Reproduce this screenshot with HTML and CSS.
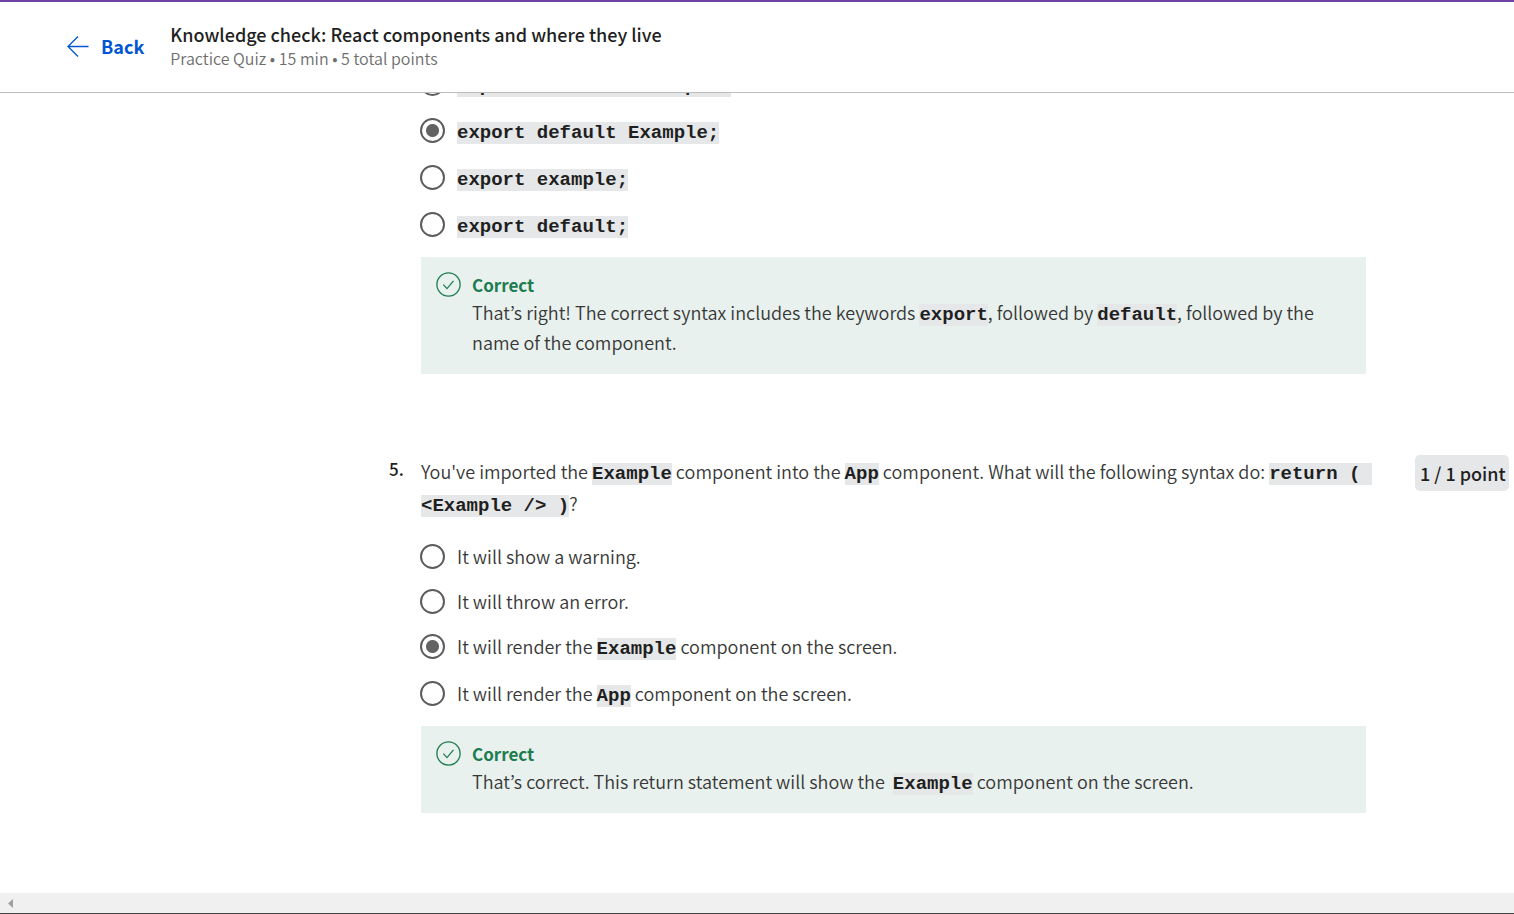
FILE: index.html
```html
<!DOCTYPE html>
<html lang="en">
<head>
<meta charset="utf-8">
<meta name="viewport" content="width=device-width, initial-scale=1">
<title>Knowledge check: React components and where they live</title>
<link rel="stylesheet" href="styles.css">
</head>
<body>
<header class="header">
  <a class="back" href="#">
    <svg class="back-icon" viewBox="0 0 22 22" aria-hidden="true"><path d="M21.5 11.5H1M11 1.5L1 11.5l10 10"/></svg>
    <span>Back</span>
  </a>
  <div>
    <h1 class="title">Knowledge check: React components and where they live</h1>
    <p class="subtitle">Practice Quiz • 15 min • 5 total points</p>
  </div>
</header>

<main class="quiz">
  <section class="question">
    <div class="question-body">
      <div class="options">
        <label class="option option-code"><input class="radio" type="radio" name="q4"><span><code>export default: Example.</code></span></label>
        <label class="option option-code"><input class="radio" type="radio" name="q4" checked><span><code>export default Example;</code></span></label>
        <label class="option option-code"><input class="radio" type="radio" name="q4"><span><code>export example;</code></span></label>
        <label class="option option-code"><input class="radio" type="radio" name="q4"><span><code>export default;</code></span></label>
      </div>
      <div class="feedback">
        <svg class="check" viewBox="0 0 25 25" aria-hidden="true"><circle cx="12.5" cy="12.5" r="11.6"/><path d="M7.3 12.6l3.7 4 6.5-7.7"/></svg>
        <div>
          <h2 class="feedback-title">Correct</h2>
          <p class="feedback-text">That’s right! The correct syntax includes the keywords <code>export</code>, followed by <code>default</code>, followed by the name of the component.</p>
        </div>
      </div>
    </div>
  </section>

  <section class="question">
    <span class="number">5.</span>
    <div class="question-body">
      <p class="prompt">You've imported the <code>Example</code> component into the <code>App</code> component. What will the following syntax do: <code>return (&nbsp; &lt;Example /&gt; )</code>?</p>
      <div class="options">
        <label class="option"><input class="radio" type="radio" name="q5"><span>It will show a warning.</span></label>
        <label class="option"><input class="radio" type="radio" name="q5"><span>It will throw an error.</span></label>
        <label class="option option-code"><input class="radio" type="radio" name="q5" checked><span>It will render the <code>Example</code> component on the screen.</span></label>
        <label class="option option-code"><input class="radio" type="radio" name="q5"><span>It will render the <code>App</code> component on the screen.</span></label>
      </div>
      <div class="feedback">
        <svg class="check" viewBox="0 0 25 25" aria-hidden="true"><circle cx="12.5" cy="12.5" r="11.6"/><path d="M7.3 12.6l3.7 4 6.5-7.7"/></svg>
        <div>
          <h2 class="feedback-title">Correct</h2>
          <p class="feedback-text">That’s correct. This return statement will show the&nbsp; <code>Example</code> component on the screen.</p>
        </div>
      </div>
    </div>
    <span class="points">1 / 1 point</span>
  </section>
</main>

<div class="scrollbar">
  <button class="scroll-left" type="button" aria-label="Scroll left"><svg class="scroll-icon" viewBox="0 0 5 9" aria-hidden="true"><path d="M5 0v9L0 4.5z"/></svg></button>
</div>
</body>
</html>
```
FILE: styles.css
```css
* { box-sizing: border-box; }

body {
  margin: 0;
  height: 100vh;
  display: flex;
  flex-direction: column;
  overflow: hidden;
  background: #fff;
  color: #373737;
  font-family: "Noto Sans CJK KR", "Noto Sans", sans-serif;
  font-size: 18px;
  font-weight: 350;
  line-height: 32px;
}

h1, h2, p { margin: 0; }

code {
  font-family: "Liberation Mono", monospace;
  font-size: 19px;
  font-weight: 700;
  line-height: 22px;
  color: #1f1f1f;
  background: #e5e7e8;
}

.header {
  flex: none;
  display: flex;
  align-items: center;
  gap: 26px;
  padding: 20px 67px 22px;
  border-top: 2px solid #6f42a5;
  border-bottom: 1px solid #bdbdbd;
}

.back {
  display: flex;
  align-items: center;
  gap: 12px;
  color: #0056d2;
  font-weight: 700;
  text-decoration: none;
}

.back-icon {
  width: 22px;
  height: 22px;
  fill: none;
  stroke: currentColor;
  stroke-width: 1.3;
}

.title {
  font-size: 18px;
  font-weight: 500;
  line-height: 24px;
  color: #1f1f1f;
}

.subtitle {
  font-size: 16px;
  line-height: 24px;
  color: #6e6e6e;
}

.quiz {
  flex: 1;
  min-height: 0;
  display: flex;
  flex-direction: column;
  justify-content: flex-end;
  gap: 81px;
  padding: 0 5px 80px 389px;
  overflow: hidden;
}

.question {
  flex: none;
  display: grid;
  grid-template-columns: 32px 1fr 94px;
  align-items: start;
}

.question-body {
  grid-column: 2;
  margin-right: 38px;
}

.number {
  font-size: 17px;
  font-weight: 500;
  line-height: 28px;
  color: #1f1f1f;
}

.prompt { margin-bottom: 16px; }

.options {
  margin: 0 0 7px -1px;
}

.option {
  display: flex;
  align-items: flex-start;
  gap: 12px;
  padding: 5px 0 8px;
}

.option-code { padding-bottom: 10px; }

.radio {
  appearance: none;
  flex: none;
  width: 25px;
  height: 25px;
  margin: 4px 0 0;
  border: 2px solid #5c5c5c;
  border-radius: 50%;
}

.radio:checked {
  background: radial-gradient(circle, #636363 6px, transparent 7px);
}

.feedback {
  display: flex;
  align-items: flex-start;
  gap: 11px;
  margin-right: 11px;
  padding: 15px 15px 17px;
  background: #e8f1ed;
}

.check {
  flex: none;
  width: 25px;
  height: 25px;
  fill: none;
  stroke: #1d7c50;
  stroke-width: 1.3;
}

.feedback-title {
  font-size: 17px;
  font-weight: 700;
  line-height: 25px;
  color: #1d7c50;
}

.feedback-text { line-height: 30px; }

.points {
  padding: 2px 5px;
  border-radius: 5px;
  background: #e5e7e8;
  color: #1f1f1f;
  font-weight: 500;
  white-space: nowrap;
}

.scrollbar {
  flex: none;
  height: 21px;
  display: flex;
  align-items: center;
  background: #f0f0f0;
  border-bottom: 1px solid #444;
}

.scroll-left {
  display: flex;
  padding: 0 8px;
  border: 0;
  background: none;
}

.scroll-icon {
  width: 5px;
  height: 9px;
  fill: #a0a0a0;
}
```
